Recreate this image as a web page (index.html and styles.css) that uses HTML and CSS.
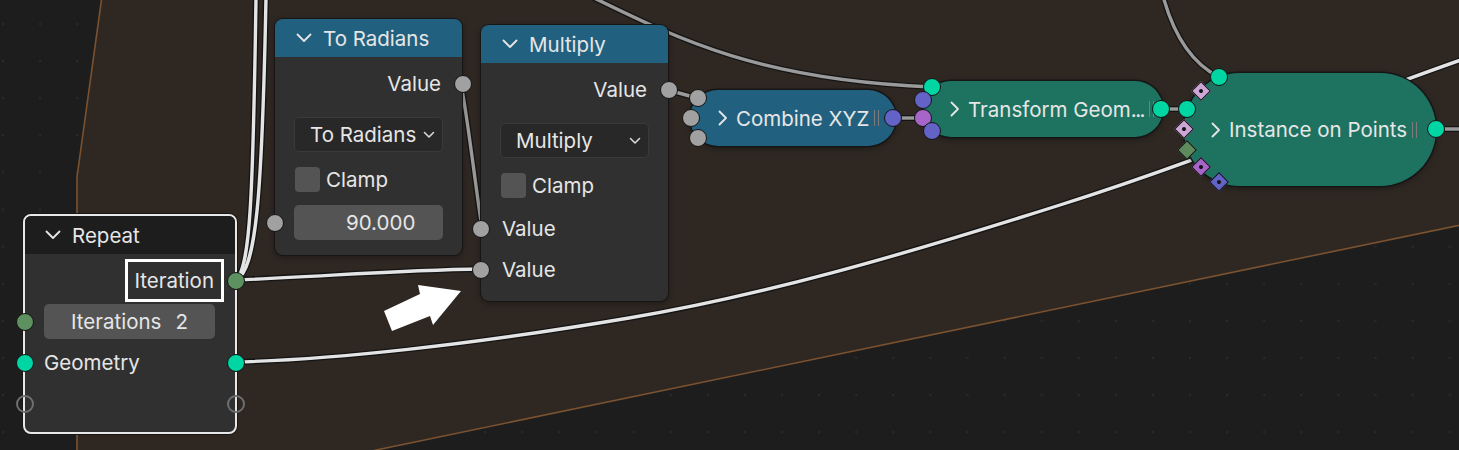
FILE: index.html
```html
<!DOCTYPE html>
<html>
<head>
<meta charset="utf-8">
<link rel="stylesheet" href="styles.css">
</head>
<body>
<div class="canvas">
  <svg class="layer" viewBox="0 0 1459 450">
    <polygon class="zone" points="102,-4 77,177 77,470 280,470 1475,222 1475,-4"/>
  </svg>
  <svg class="layer" viewBox="0 0 1459 450">
    <g class="lk-bg">
      <path d="M236 280 C 250 268, 253 200, 256 -2"/>
      <path d="M236 280 C 256 270, 262 200, 266 -2"/>
      <path d="M236 280 C 330 276, 400 270, 482 269"/>
      <path d="M461 84 C 468 120, 476 190, 482 228"/>
      <path d="M668 90 L 697 98"/>
      <path d="M893 118 L 923 118"/>
      <path d="M1161 109 L 1187 109"/>
      <path d="M590 -4 C 680 40, 760 80, 932 87"/>
      <path d="M1163 -4 C 1175 40, 1195 65, 1219 77"/>
      <path d="M234 362 C 330 360, 470 345, 629 318 C 760 296, 900 256, 1060 205 S 1330 105, 1475 55"/>
      <path d="M1436 129 L 1475 129"/>
    </g>
    <g class="lk-w">
      <path d="M236 280 C 250 268, 253 200, 256 -2"/>
      <path d="M236 280 C 256 270, 262 200, 266 -2"/>
      <path d="M236 280 C 330 276, 400 270, 482 269"/>
      <path d="M234 362 C 330 360, 470 345, 629 318 C 760 296, 900 256, 1060 205 S 1330 105, 1475 55"/>
    </g>
    <g class="lk-g">
      <path d="M461 84 C 468 120, 476 190, 482 228"/>
      <path d="M668 90 L 697 98"/>
      <path d="M893 118 L 923 118"/>
      <path d="M1161 109 L 1187 109"/>
      <path d="M590 -4 C 680 40, 760 80, 932 87"/>
      <path d="M1163 -4 C 1175 40, 1195 65, 1219 77"/>
      <path d="M1436 129 L 1475 129"/>
    </g>
  </svg>

  <!-- Repeat node -->
  <div class="node repeat">
    <div class="head dark">
      <svg class="chev" viewBox="0 0 16 10"><path d="M1.5 1.5 L8 8 L14.5 1.5"/></svg>
      <span>Repeat</span>
    </div>
    <div class="body">
      <div class="row out">
        <span class="hl">Iteration</span>
        <span class="sock r int"></span>
      </div>
      <div class="row field-row">
        <span class="sock l int"></span>
        <div class="field centered"><span>Iterations</span><span>2</span></div>
      </div>
      <div class="row in">
        <span class="sock l geo"></span>
        <span>Geometry</span>
        <span class="sock r geo"></span>
      </div>
      <div class="row in">
        <span class="sock l empty"></span>
        <span class="sock r empty"></span>
      </div>
    </div>
  </div>

  <!-- To Radians node -->
  <div class="node radians">
    <div class="head blue">
      <svg class="chev" viewBox="0 0 16 10"><path d="M1.5 1.5 L8 8 L14.5 1.5"/></svg>
      <span>To Radians</span>
    </div>
    <div class="body">
      <div class="row out">
        <span>Value</span>
        <span class="sock r flt"></span>
      </div>
      <div class="dropdown"><span>To Radians</span><svg class="dd" viewBox="0 0 12 8"><path d="M1.5 1.5 L6 6 L10.5 1.5"/></svg></div>
      <div class="check-row"><span class="box"></span><span>Clamp</span></div>
      <div class="row field-row">
        <span class="sock l flt"></span>
        <div class="field num"><span>90.000</span></div>
      </div>
    </div>
  </div>

  <!-- Multiply node -->
  <div class="node multiply">
    <div class="head blue">
      <svg class="chev" viewBox="0 0 16 10"><path d="M1.5 1.5 L8 8 L14.5 1.5"/></svg>
      <span>Multiply</span>
    </div>
    <div class="body">
      <div class="row out">
        <span>Value</span>
        <span class="sock r flt"></span>
      </div>
      <div class="dropdown"><span>Multiply</span><svg class="dd" viewBox="0 0 12 8"><path d="M1.5 1.5 L6 6 L10.5 1.5"/></svg></div>
      <div class="check-row"><span class="box"></span><span>Clamp</span></div>
      <div class="row in first-in">
        <span class="sock l flt"></span>
        <span>Value</span>
      </div>
      <div class="row in">
        <span class="sock l flt"></span>
        <span>Value</span>
      </div>
    </div>
  </div>

  <!-- Combine XYZ (collapsed) -->
  <div class="cnode combine">
    <svg class="cchev" viewBox="0 0 10 16"><path d="M1.5 1.5 L8 8 L1.5 14.5"/></svg>
    <span class="ctitle">Combine XYZ</span>
    <span class="grip"></span>
    <span class="sock flt" style="left:-1px;top:-1px"></span>
    <span class="sock flt" style="left:-8px;top:19px"></span>
    <span class="sock flt" style="left:-1px;top:39px"></span>
    <span class="sock vec" style="left:194px;top:19px"></span>
  </div>

  <!-- Transform Geometry (collapsed) -->
  <div class="cnode transform">
    <svg class="cchev" viewBox="0 0 10 16"><path d="M1.5 1.5 L8 8 L1.5 14.5"/></svg>
    <span class="ctitle">Transform Geom<span class="dots">...</span></span>
    <span class="grip"></span>
    <span class="sock geo" style="left:0px;top:-3px"></span>
    <span class="sock vec" style="left:-9px;top:10px"></span>
    <span class="sock rot" style="left:-9px;top:28px"></span>
    <span class="sock vec" style="left:0px;top:41px"></span>
    <span class="sock geo" style="left:229px;top:19px"></span>
  </div>

  <!-- Instance on Points (collapsed) -->
  <div class="cnode instance">
    <svg class="cchev" viewBox="0 0 10 16"><path d="M1.5 1.5 L8 8 L1.5 14.5"/></svg>
    <span class="ctitle">Instance on Points</span>
    <span class="grip"></span>
    <span class="sock geo" style="left:26px;top:-5px"></span>
    <span class="dia bool" style="left:10px;top:11px"></span>
    <span class="sock geo" style="left:-6px;top:27px"></span>
    <span class="dia bool" style="left:-7px;top:49px"></span>
    <span class="dia intd" style="left:-4px;top:70px"></span>
    <span class="dia rotd" style="left:10px;top:87px"></span>
    <span class="dia vecd" style="left:28px;top:102px"></span>
    <span class="sock geo" style="left:243px;top:47px"></span>
  </div>

  <svg class="layer arrow" viewBox="0 0 1459 450">
    <polygon points="384,311 420,294 418,285 461,291 433,325 430,316 392,331"/>
  </svg>
</div>
</body>
</html>
```

FILE: styles.css
```css
* { box-sizing: border-box; margin: 0; padding: 0; }
body { margin: 0; background: #1d1d1d; font-family: Inter, "Noto Sans", sans-serif; }

.canvas {
  position: relative;
  width: 1459px;
  height: 450px;
  overflow: hidden;
  background-color: #1d1d1d;
  background-image: radial-gradient(circle, #2a2a2a 0 1px, transparent 1.6px);
  background-size: 37.1px 37.1px;
  background-position: -15.5px 5.5px;
}
.layer { position: absolute; left: 0; top: 0; width: 1459px; height: 450px; }
.zone { fill: #2e2722; stroke: #7b5230; stroke-width: 1.6; }
.lk-bg path { fill: none; stroke: #141414; stroke-width: 6; }
.lk-w path { fill: none; stroke: #e4e4e4; stroke-width: 3.4; }
.lk-g path { fill: none; stroke: #9a9a9a; stroke-width: 3.4; }
.arrow polygon { fill: #ffffff; }

/* nodes */
.node {
  position: absolute;
  background: #303030;
  border-radius: 8px;
  box-shadow: 0 0 0 1px #161616, 0 2px 6px rgba(0,0,0,0.35);
  color: #e6e6e6;
  font-size: 20.5px;
}
.head {
  height: 38px;
  display: flex;
  align-items: center;
  gap: 11px;
  padding-left: 21px;
  border-radius: 8px 8px 0 0;
}
.head.blue { background: #22607f; }
.head.dark { background: #1d1d1d; border-radius: 6px 6px 0 0; }
.chev { width: 16px; height: 10px; }
.chev path { fill: none; stroke: #e6e6e6; stroke-width: 1.8; stroke-linecap: round; stroke-linejoin: round; }

.body { display: flex; flex-direction: column; }
.row {
  position: relative;
  height: 41px;
  display: flex;
  align-items: center;
  padding: 0 21px 0 21px;
}
.row.out { justify-content: flex-end; }

.sock {
  position: absolute;
  width: 18px;
  height: 18px;
  border-radius: 50%;
  border: 1.5px solid #141414;
}
.row .sock { top: 50%; margin-top: -9px; }
.row .sock.l { left: -9px; }
.row .sock.r { right: -10px; }
.flt { background: #a1a1a1; }
.int { background: #5d9160; }
.geo { background: #00d6a3; }
.vec { background: #6363c7; }
.rot { background: #a865c9; }
.empty { background: transparent; border: 2px solid #6e6e6e; }

.dia {
  position: absolute;
  width: 14px;
  height: 14px;
  transform: rotate(45deg);
  border: 1.5px solid #141414;
}
.dia::after {
  content: "";
  position: absolute;
  left: 50%; top: 50%;
  width: 4px; height: 4px;
  margin: -2px 0 0 -2px;
  border-radius: 50%;
  background: #141414;
}
.bool { background: #cca6d6; }
.intd { background: #5d8b5e; }
.intd::after { display: none; }
.rotd { background: #a865c9; }
.vecd { background: #6363c7; }

.field {
  flex: 1;
  height: 35px;
  background: #545454;
  border-radius: 5px;
  display: flex;
  align-items: center;
}
.field.centered { justify-content: center; gap: 14px; }
.field.num { padding-left: 52px; }

.dropdown {
  margin: 13px 19px 0 19px;
  height: 35px;
  background: #282828;
  border: 1px solid #3a3a3a;
  border-radius: 5px;
  display: flex;
  align-items: center;
  justify-content: space-between;
  padding: 0 7px 0 15px;
}
.dd { width: 12px; height: 8px; }
.dd path { fill: none; stroke: #d8d8d8; stroke-width: 1.6; stroke-linecap: round; stroke-linejoin: round; }

.check-row {
  margin: 15px 19px 0 20px;
  height: 25px;
  display: flex;
  align-items: center;
  gap: 6px;
}
.box { width: 25px; height: 25px; background: #545454; border-radius: 4px; }

/* Repeat */
.repeat {
  left: 23px; top: 214px;
  width: 214px; height: 220px;
  border: 2px solid #e8e8e8;
  box-shadow: 0 0 0 1px #161616;
}
.repeat .head { padding-left: 20px; }
.repeat .body { padding-top: 6px; }
.repeat .row { padding-left: 19px; }
.repeat .row.out { padding-right: 11px; }
.hl {
  border: 3px solid #ffffff;
  height: 43px;
  display: flex;
  align-items: center;
  padding: 0 7px 0 6px;
}
.repeat .field-row { padding: 0 20px 0 19px; }

/* To Radians */
.radians { left: 275px; top: 19px; width: 187px; height: 236px; }
.radians .body { padding-top: 6px; }
.radians .field-row { margin-top: 10px; padding: 0 19px; }

/* Multiply */
.multiply { left: 481px; top: 25px; width: 187px; height: 276px; }
.multiply .body { padding-top: 6px; }
.multiply .first-in { margin-top: 10px; }

/* collapsed nodes */
.cnode {
  position: absolute;
  height: 56px;
  border-radius: 28px;
  display: flex;
  align-items: center;
  color: #e6e6e6;
  font-size: 20.5px;
  box-shadow: 0 0 0 1.5px #161616, 0 2px 6px rgba(0,0,0,0.35);
}
.cchev { width: 10px; height: 16px; margin-right: 8px; }
.cchev path { fill: none; stroke: #e6e6e6; stroke-width: 1.8; stroke-linecap: round; stroke-linejoin: round; }
.dots { letter-spacing: -1.5px; }
.grip {
  width: 5px; height: 16px;
  margin-left: 5px;
  border-left: 1px solid #7c7c7c;
  border-right: 1px solid #7c7c7c;
}
.combine { left: 690px; top: 90px; width: 206px; background: #22607f; padding-left: 28px; }
.transform { left: 923px; top: 81px; width: 240px; background: #1e7360; padding-left: 27px; }
.instance {
  left: 1184px; top: 73px; width: 252px; height: 113px;
  border-radius: 56px;
  background: #1e7360;
  padding-left: 27px;
}
```
